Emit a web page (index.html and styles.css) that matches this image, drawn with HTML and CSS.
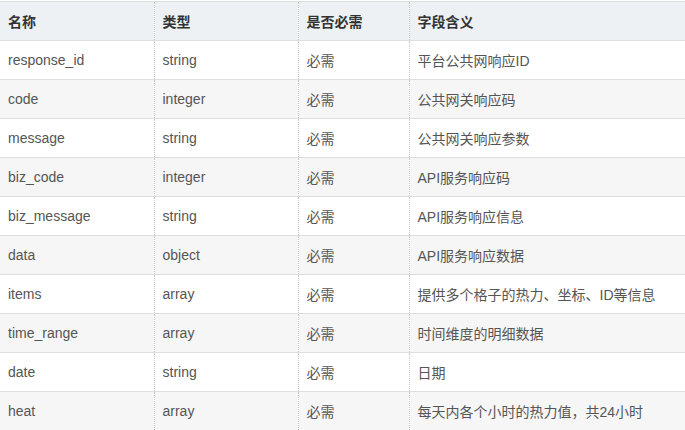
FILE: index.html
```html
<!DOCTYPE html>
<html lang="zh-CN">
<head>
<meta charset="utf-8">
<link rel="stylesheet" href="styles.css">
</head>
<body>
<div class="wrap">
<table class="params">
<colgroup><col class="c1"><col class="c2"><col class="c3"><col class="c4"></colgroup>
<thead>
<tr><th>名称</th><th>类型</th><th>是否必需</th><th>字段含义</th></tr>
</thead>
<tbody>
<tr><td>response_id</td><td>string</td><td>必需</td><td>平台公共网响应ID</td></tr>
<tr><td>code</td><td>integer</td><td>必需</td><td>公共网关响应码</td></tr>
<tr><td>message</td><td>string</td><td>必需</td><td>公共网关响应参数</td></tr>
<tr><td>biz_code</td><td>integer</td><td>必需</td><td>API服务响应码</td></tr>
<tr><td>biz_message</td><td>string</td><td>必需</td><td>API服务响应信息</td></tr>
<tr><td>data</td><td>object</td><td>必需</td><td>API服务响应数据</td></tr>
<tr><td>items</td><td>array</td><td>必需</td><td>提供多个格子的热力、坐标、ID等信息</td></tr>
<tr><td>time_range</td><td>array</td><td>必需</td><td>时间维度的明细数据</td></tr>
<tr><td>date</td><td>string</td><td>必需</td><td>日期</td></tr>
<tr><td>heat</td><td>array</td><td>必需</td><td>每天内各个小时的热力值，共24小时</td></tr>
</tbody>
</table>
</div>
</body>
</html>
```
FILE: styles.css
```css
html, body {
  margin: 0;
  padding: 0;
  background: #ffffff;
}
.wrap {
  padding-top: 1px;
}
.params {
  width: 685px;
  border-collapse: collapse;
  table-layout: fixed;
  font-family: "Liberation Sans", Arial, "Noto Sans CJK SC", sans-serif;
  font-size: 14px;
  color: #555555;
}
.c1 { width: 154px; }
.c2 { width: 144px; }
.c3 { width: 111px; }
.params th,
.params td {
  height: 38px;
  padding: 0 8px;
  text-align: left;
  vertical-align: middle;
  border-top: 1px solid #dcdfe0;
  border-bottom: 1px solid #dcdfe0;
  border-left: 1px dotted #c8c8c8;
  white-space: nowrap;
  overflow: hidden;
}
.params th:first-child,
.params td:first-child {
  border-left: none;
}
.params th {
  background: #eef1f3;
  color: #333333;
  font-weight: bold;
}
.params tbody tr:nth-child(even) td {
  background: #f6f6f6;
}
```
